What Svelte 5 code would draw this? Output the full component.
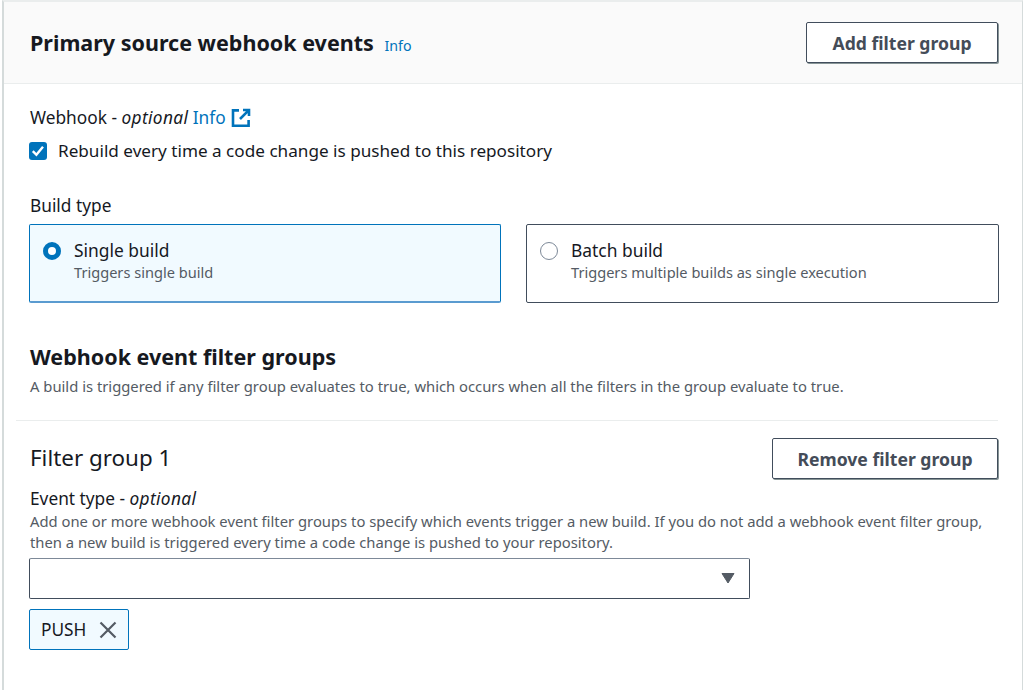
<script>
  const buildTypes = [
    { title: 'Single build', hint: 'Triggers single build', selected: true },
    { title: 'Batch build', hint: 'Triggers multiple builds as single execution', selected: false }
  ];
</script>

<div class="panel">
  <header class="panel-head">
    <h2>Primary source webhook events <a class="info" href="#info">Info</a></h2>
    <button class="btn add">Add filter group</button>
  </header>

  <div class="body">
    <div class="webhook">
      <div class="label">
        Webhook - <em>optional</em> <a class="link" href="#info">Info</a>
        <svg class="ext" width="20" height="20" viewBox="0 0 20 20" fill="none" stroke="#0073bb" stroke-width="2.6">
          <path d="M8 2.4H2v15.4h15.6V12" />
          <path d="M12 2h6v6M17.6 2.4L9 11" />
        </svg>
      </div>
      <label class="check">
        <span class="box">
          <svg width="18" height="18" viewBox="0 0 18 18" fill="none" stroke="#fff" stroke-width="2.4">
            <path d="M3.8 9.2l3.6 3.6 6.6-8" />
          </svg>
        </span>
        Rebuild every time a code change is pushed to this repository
      </label>
    </div>

    <div class="label type-label">Build type</div>
    <div class="tiles">
      {#each buildTypes as t}
        <div class="tile" class:selected={t.selected}>
          <span class="radio"></span>
          <div>
            <div class="tile-title">{t.title}</div>
            <div class="tile-hint">{t.hint}</div>
          </div>
        </div>
      {/each}
    </div>

    <h3>Webhook event filter groups</h3>
    <p class="desc">A build is triggered if any filter group evaluates to true, which occurs when all the filters in the group evaluate to true.</p>
  </div>

  <div class="group">
    <div class="group-head">
      <h4>Filter group 1</h4>
      <button class="btn remove">Remove filter group</button>
    </div>
    <div class="label event-label">Event type - <em>optional</em></div>
    <p class="desc event-desc">Add one or more webhook event filter groups to specify which events trigger a new build. If you do not add a webhook event filter group, then a new build is triggered every time a code change is pushed to your repository.</p>
    <div class="select">
      <svg width="14" height="11" viewBox="0 0 14 11"><path d="M1 .5h12L7 10z" fill="#545b64" stroke="#545b64" stroke-linejoin="round" /></svg>
    </div>
    <div class="token">
      PUSH
      <svg width="18" height="18" viewBox="0 0 18 18" fill="none" stroke="#545b64" stroke-width="2.2">
        <path d="M1.5 1.5l15 15M16.5 1.5l-15 15" />
      </svg>
    </div>
  </div>
</div>

<style>
  :global(body) {
    background: #fff;
    font-family: "Noto Sans", "Open Sans", sans-serif;
    color: #16191f;
  }

  .panel {
    box-sizing: border-box;
    width: 1021px;
    height: 690px;
    margin-left: 2px;
    border-left: 2px solid #d5dbdb;
    border-top: 2px solid #eaeded;
    border-right: 1px solid #d5dbdb;
    overflow: hidden;
  }

  .panel-head {
    box-sizing: border-box;
    height: 82px;
    display: flex;
    align-items: center;
    justify-content: space-between;
    padding: 0 24px 0 26px;
    background: #fafafa;
    border-bottom: 1px solid #eaeded;
  }

  h2 {
    margin: 0;
    font-size: 21.5px;
    font-weight: 700;
  }

  .info {
    margin-left: 5px;
    font-size: 14.2px;
    font-weight: 400;
    color: #0073bb;
    text-decoration: none;
  }

  .btn {
    box-sizing: border-box;
    height: 41px;
    background: #fff;
    border: 1px solid #414d5c;
    border-radius: 2px;
    box-shadow: 1px 1px 0 #879596;
    color: #444c58;
    font: 700 17.6px "Noto Sans", sans-serif;
    padding: 0;
  }

  .add {
    width: 192px;
  }

  .remove {
    width: 226px;
  }

  .body {
    padding: 22px 24px 0 25px;
  }

  .label {
    font-size: 17.3px;
    line-height: 24px;
    padding-left: 1px;
  }

  em {
    letter-spacing: 0.35px;
  }

  .link {
    color: #0073bb;
    text-decoration: none;
  }

  .ext {
    vertical-align: -4px;
    margin-left: 1px;
  }

  .webhook {
    height: 88px;
  }

  .check {
    display: flex;
    align-items: center;
    gap: 11px;
    margin-top: 9px;
    font-size: 17.15px;
    line-height: 24px;
  }

  .box {
    width: 18px;
    height: 18px;
    background: #0073bb;
    border-radius: 3px;
    display: flex;
  }

  .type-label {
    margin-bottom: 6px;
  }

  .tiles {
    display: grid;
    grid-template-columns: 472px 473px;
    gap: 25px;
  }

  .tile {
    box-sizing: border-box;
    height: 79px;
    display: flex;
    gap: 13px;
    padding: 13px 13px;
    border: 1px solid #414d5c;
    border-radius: 2px;
  }

  .tile.selected {
    background: #f1faff;
    border-color: #0073bb;
    border-bottom-color: #5a9bd0;
    border-bottom-width: 2px;
  }

  .radio {
    box-sizing: border-box;
    width: 18px;
    height: 18px;
    margin-top: 4px;
    border: 1.5px solid #7d8998;
    border-radius: 50%;
    background: #fff;
  }

  .selected .radio {
    border: 5px solid #0073bb;
  }

  .tile-title {
    font-size: 17.4px;
    line-height: 24px;
  }

  .tile-hint {
    font-size: 14.6px;
    line-height: 20px;
    color: #545b64;
  }

  h3 {
    margin: 40px 0 0;
    padding-left: 1px;
    font-size: 21.5px;
    line-height: 28px;
    font-weight: 700;
  }

  .desc {
    margin: 0;
    padding-left: 1px;
    font-size: 14.8px;
    line-height: 21px;
    color: #545b64;
  }

  .body .desc {
    margin-top: 5px;
  }

  .group {
    margin: 23px 24px 0 12px;
    padding: 17px 0 0 13px;
    border-top: 1px solid #eaeded;
  }

  .group-head {
    display: flex;
    align-items: center;
    justify-content: space-between;
    height: 41px;
  }

  h4 {
    margin: 0 0 0 1px;
    padding-bottom: 2px;
    font-size: 22.4px;
    font-weight: 400;
  }

  .event-label {
    margin-top: 8px;
  }

  .event-desc {
    margin-top: 0;
  }

  .select {
    box-sizing: border-box;
    width: 721px;
    height: 41px;
    margin-top: 5px;
    display: flex;
    align-items: center;
    justify-content: flex-end;
    padding-right: 14px;
    border: 1px solid #414d5c;
    border-top-color: #7d8998;
    border-radius: 2px;
  }

  .token {
    box-sizing: border-box;
    width: 100px;
    height: 41px;
    margin-top: 10px;
    display: flex;
    align-items: center;
    gap: 13px;
    padding-left: 11px;
    background: #f1faff;
    border: 1px solid #0073bb;
    border-radius: 2px;
    font-size: 17.3px;
  }
</style>
